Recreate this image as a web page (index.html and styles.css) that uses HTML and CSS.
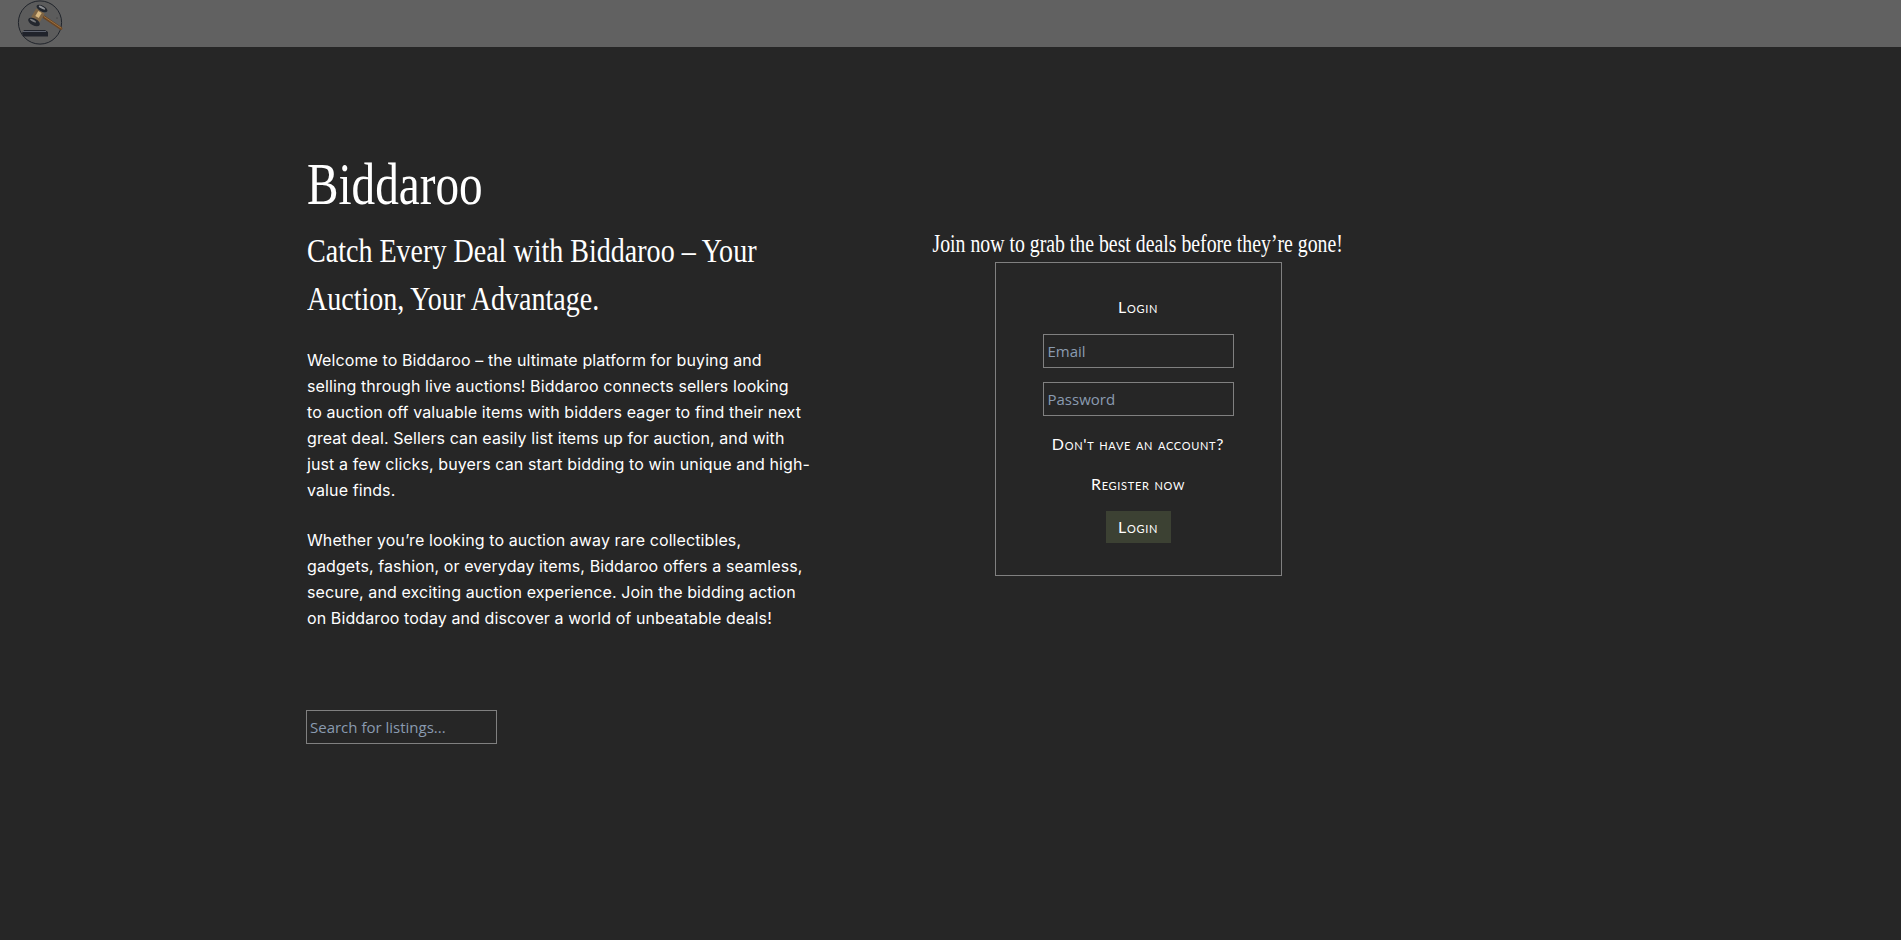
FILE: index.html
```html
<!DOCTYPE html>
<html lang="en">

<head>
    <meta charset="UTF-8">
    <meta name="viewport" content="width=device-width, initial-scale=1.0">
    <title>Biddaroo</title>
    <link rel="stylesheet" href="styles.css">
</head>

<body>
    <header class="topbar">
        <svg class="logo" viewBox="0 0 48 48" aria-label="Biddaroo logo">
            <circle cx="24" cy="22.5" r="21.6" fill="#5c5c5c" stroke="#20242b" stroke-width="1" />
            <path d="M28 17 L45 28.5" stroke="#6b4522" stroke-width="2.8" stroke-linecap="round" />
            <path d="M28 16.5 L45 28" stroke="#a67c4a" stroke-width="0.8" stroke-linecap="round" />
            <path d="M24.5 11 L19.5 19.5" stroke="#7d6444" stroke-width="10" />
            <path d="M24 12 L21 17" stroke="#d8b880" stroke-width="4" />
            <ellipse cx="26" cy="8.5" rx="6" ry="2.9" transform="rotate(28 26 8.5)" fill="#23272e" />
            <ellipse cx="26" cy="7.6" rx="3.6" ry="1.1" transform="rotate(28 26 7.6)" fill="#8d8f92" />
            <ellipse cx="18" cy="22" rx="6.4" ry="3.4" transform="rotate(28 18 22)" fill="#23272e" />
            <ellipse cx="17" cy="20.6" rx="3.4" ry="1" transform="rotate(28 17 20.6)" fill="#77797c" />
            <path d="M8 30 H29 L32 32 V36.5 H7 L6 33 Z" fill="#20232b" />
            <path d="M7 31.5 H30" stroke="#5d626e" stroke-width="1" />
            <circle cx="41" cy="18" r="0.5" fill="#2a2a2a" />
        </svg>
    </header>

    <main class="content">
        <section class="intro">
            <h1>Biddaroo</h1>
            <h2>Catch Every Deal with Biddaroo – Your Auction, Your Advantage.</h2>
            <p>
                Welcome to Biddaroo – the ultimate platform for buying and<br>
                selling through live auctions! Biddaroo connects sellers looking<br>
                to auction off valuable items with bidders eager to find their next<br>
                great deal. Sellers can easily list items up for auction, and with<br>
                just a few clicks, buyers can start bidding to win unique and high-<br>
                value finds.
            </p>
            <p>
                Whether you’re looking to auction away rare collectibles,<br>
                gadgets, fashion, or everyday items, Biddaroo offers a seamless,<br>
                secure, and exciting auction experience. Join the bidding action<br>
                on Biddaroo today and discover a world of unbeatable deals!
            </p>
            <input class="field search" type="text" placeholder="Search for listings...">
        </section>

        <section class="join">
            <h3>Join now to grab the best deals before they’re gone!</h3>
            <form class="login-box" onsubmit="return false">
                <div class="login-title">Login</div>
                <input class="field" type="email" placeholder="Email">
                <input class="field" type="password" placeholder="Password">
                <div class="login-text">Don't have an account?</div>
                <a class="login-text register" href="#">Register now</a>
                <button type="submit">Login</button>
            </form>
        </section>
    </main>
</body>

</html>
```

FILE: styles.css
```css
body {
    margin: 0;
    background: #262626;
    color: #fff;
    font-family: 'Inter', Arial, sans-serif;
}

.topbar {
    height: 47px;
    background: #616161;
    padding-left: 16px;
}

.logo {
    display: block;
    width: 48px;
    height: 48px;
}

.content {
    display: flex;
    padding: 99px 0 0 306px;
}

.intro {
    width: 505px;
}

h1,
h2,
h3 {
    font-family: 'Liberation Serif', serif;
    font-weight: 400;
    margin: 0;
}

/* Liberation Serif is wider than the original display face, so squeeze it */
h1 {
    font-size: 59px;
    line-height: 76px;
    margin-left: 1px;
    transform: scaleX(0.8);
    transform-origin: left;
}

h2 {
    font-size: 34px;
    line-height: 48px;
    margin: 5px 0 0 1px;
    width: 610px;
    transform: scaleX(0.825);
    transform-origin: left;
}

.intro p {
    font-size: 16px;
    line-height: 26px;
    letter-spacing: 0.1px;
    margin: 24px 0 0 1px;
}

.field {
    display: block;
    box-sizing: border-box;
    width: 191px;
    height: 34px;
    padding: 0 3px;
    background: #262626;
    border: 1px solid #808080;
    color: #fff;
    font-family: 'Open Sans', sans-serif;
    font-size: 15px;
}

.field::placeholder {
    color: #8a9bb0;
}

.search {
    margin-top: 79px;
}

.join {
    display: flex;
    flex-direction: column;
    align-items: center;
    margin: 80px 0 0 122px;
    width: 410px;
}

h3 {
    font-size: 26px;
    line-height: 36px;
    white-space: nowrap;
    transform: scaleX(0.761);
}

.login-box {
    display: flex;
    flex-direction: column;
    align-items: center;
    box-sizing: border-box;
    width: 287px;
    height: 314px;
    border: 1px solid #808080;
    font-family: 'Lato', sans-serif;
    font-variant: small-caps;
    font-size: 16px;
    letter-spacing: 0.7px;
}

.login-title {
    margin: 33px 0 16px;
    line-height: 22px;
}

.login-box .field {
    margin-bottom: 14px;
    padding: 0 4px;
    font-variant: normal;
    letter-spacing: 0;
}

.login-text {
    color: #fff;
    text-decoration: none;
    line-height: 22px;
    margin: 3px 0 18px;
}

.register {
    margin: 0 0 16px;
}

button {
    width: 65px;
    height: 32px;
    padding: 0 0 2px;
    background: #3c4133;
    color: #fff;
    border: none;
    font: inherit;
    letter-spacing: inherit;
}
```
